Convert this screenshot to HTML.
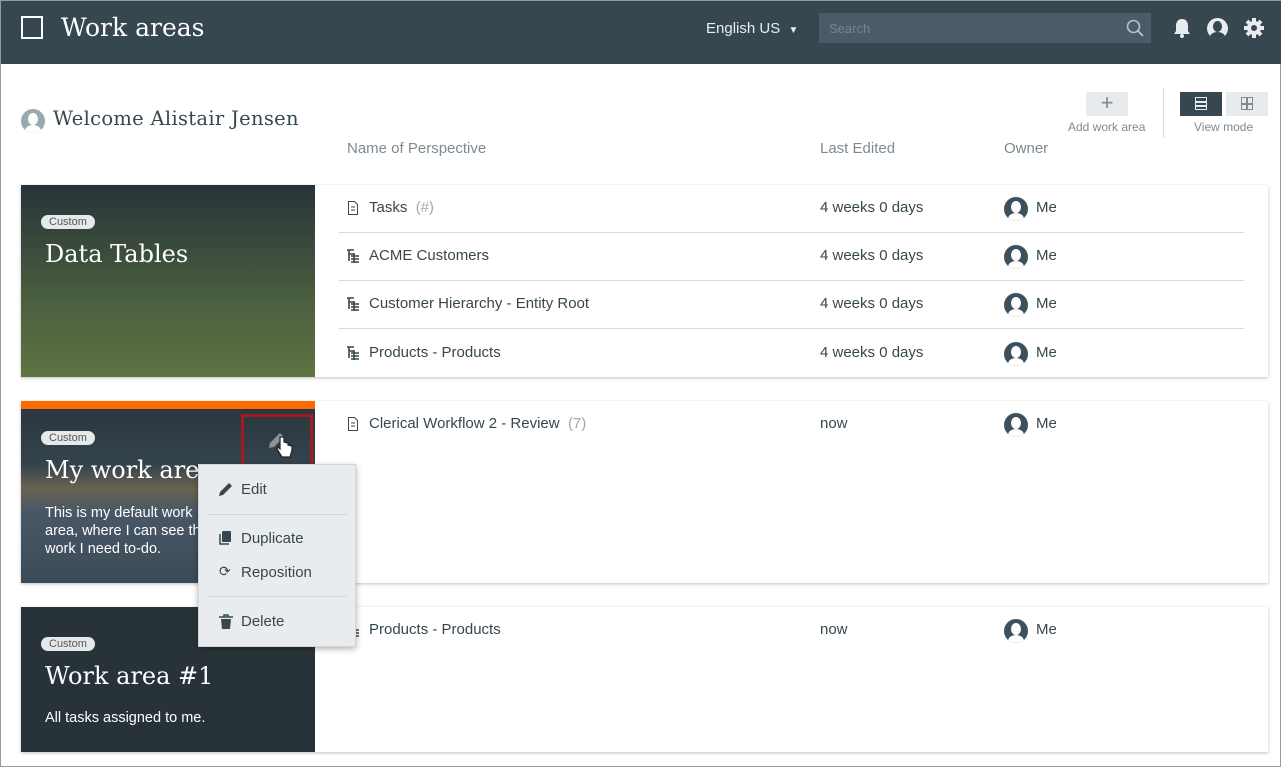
<!DOCTYPE html>
<html><head><meta charset="utf-8"><style>
*{box-sizing:border-box;margin:0;padding:0}
body{width:1281px;height:767px;overflow:hidden;background:#fff;font-family:"Liberation Sans",sans-serif;position:relative;border:1px solid #999}
.abs{position:absolute}
.hdr{left:0;top:0;width:1281px;height:63px;background:#37474f}
.serif{font-family:"DejaVu Serif","Liberation Serif",serif}
.card{position:absolute;left:20px;width:1247px;background:#fff;box-shadow:0 1px 3px rgba(0,0,0,.25)}
.img{position:absolute;left:0;top:0;width:294px;height:100%;color:#fff}
.badge{position:absolute;left:20px;font-size:11px;color:#555;background:#e6e9ec;border-radius:8px;padding:1px 8px}
.ttl{position:absolute;left:24px;font-size:24px;font-family:"DejaVu Serif","Liberation Serif",serif;font-weight:normal}
.row{position:absolute;left:318px;width:905px;height:48px;font-size:15px;color:#37474f}
.row .n{position:absolute;left:30px;top:14px}
.row .d{position:absolute;left:481px;top:14px}
.row .o{position:absolute;left:697px;top:14px}
.row .ic{position:absolute;left:8px;top:16px}
.av{position:absolute;left:665px;top:12px;width:24px;height:24px;border-radius:50%;background:#3d505c;overflow:hidden}
.av:before{content:"";position:absolute;left:7px;top:4px;width:10px;height:12px;border-radius:50%;background:#fff}
.av:after{content:"";position:absolute;left:4px;top:16px;width:16px;height:12px;border-radius:50%;background:#fff}
.sep{position:absolute;left:20px;width:885px;height:1px;background:#d5dadf;bottom:0}
.g{color:#a0a8ae}
.mi{position:absolute;left:20px;font-size:15px;color:#37474f}
</style></head><body>
<div class="abs hdr"></div>
<div class="abs" style="left:20px;top:15px;width:22px;height:23px;border:2px solid #fff"></div>
<div class="abs serif" style="left:60px;top:12px;font-size:25px;color:#fff">Work areas</div>
<div class="abs" style="left:705px;top:19px;font-size:15px;color:#e8ecef">English US &nbsp;<span style="font-size:10px">▼</span></div>
<div class="abs" style="left:818px;top:12px;width:332px;height:30px;background:#4a5c67"></div>
<div class="abs" style="left:828px;top:20px;font-size:13px;color:#75868f">Search</div>
<svg class="abs" style="left:1125px;top:18px" width="18" height="18"><circle cx="7.5" cy="7.5" r="6" fill="none" stroke="#b8c2c8" stroke-width="1.6"/><path d="M12 12l5 5" stroke="#b8c2c8" stroke-width="1.8"/></svg>
<svg class="abs" style="left:1172px;top:16px" width="18" height="22"><path d="M9 2c-4 0-6 3-6 7v5l-2 3h16l-2-3V9c0-4-2-7-6-7z" fill="#e8ecef"/><circle cx="9" cy="19" r="2" fill="#e8ecef"/></svg>
<div class="abs" style="left:1206px;top:17px;width:21px;height:21px;border-radius:50%;background:#e8ecef;overflow:hidden"><div class="abs" style="left:6px;top:3px;width:9px;height:11px;border-radius:50%;background:#37474f"></div><div class="abs" style="left:3px;top:14px;width:15px;height:10px;border-radius:50%;background:#37474f"></div></div>
<svg class="abs" style="left:1242px;top:16px" width="22" height="22" viewBox="0 0 22 22"><g fill="#e8ecef"><circle cx="11" cy="11" r="7"/><g stroke="#e8ecef" stroke-width="4"><path d="M11 1v20M1 11h20M4 4l14 14M18 4L4 18"/></g></g><circle cx="11" cy="11" r="3" fill="#37474f"/></svg>

<div class="abs" style="left:20px;top:108px;width:24px;height:24px;border-radius:50%;background:#9aa8b0;overflow:hidden"><div class="abs" style="left:7px;top:4px;width:10px;height:12px;border-radius:50%;background:#fff"></div><div class="abs" style="left:4px;top:16px;width:16px;height:12px;border-radius:50%;background:#fff"></div></div>
<div class="abs serif" style="left:52px;top:106px;font-size:19.5px;color:#37474f;letter-spacing:.3px">Welcome Alistair Jensen</div>
<div class="abs" style="left:346px;top:139px;font-size:15px;color:#7d8a92">Name of Perspective</div>
<div class="abs" style="left:819px;top:139px;font-size:15px;color:#7d8a92">Last Edited</div>
<div class="abs" style="left:1003px;top:139px;font-size:15px;color:#7d8a92">Owner</div>
<div class="abs" style="left:1085px;top:91px;width:42px;height:24px;background:#e8ebee;color:#7d8a92;text-align:center;font-size:22px;line-height:22px">+</div>
<div class="abs" style="left:1067px;top:119px;font-size:12px;color:#7d8a92">Add work area</div>
<div class="abs" style="left:1162px;top:87px;width:1px;height:50px;background:#d5dadf"></div>
<div class="abs" style="left:1179px;top:91px;width:42px;height:24px;background:#37474f"><div class="abs" style="left:15px;top:5px;width:12px;height:13px;border:1.5px solid #e8ecef"></div><div class="abs" style="left:15px;top:9px;width:12px;height:1.5px;background:#e8ecef"></div><div class="abs" style="left:15px;top:13px;width:12px;height:1.5px;background:#e8ecef"></div></div>
<div class="abs" style="left:1225px;top:91px;width:42px;height:24px;background:#e8ebee"><div class="abs" style="left:15px;top:5px;width:12px;height:13px;border:1.5px solid #7d8a92"></div><div class="abs" style="left:20px;top:5px;width:1.5px;height:13px;background:#7d8a92"></div><div class="abs" style="left:15px;top:11px;width:12px;height:1.5px;background:#7d8a92"></div></div>
<div class="abs" style="left:1193px;top:119px;font-size:12px;color:#7d8a92">View mode</div>

<div class="card" style="top:184px;height:192px">
 <div class="img" style="background:linear-gradient(#283339,#4a5f3e 60%,#5e7443)">
  <div class="badge" style="top:30px">Custom</div>
  <div class="ttl" style="top:55px">Data Tables</div>
 </div>
</div>
<div class="row" style="top:184px;left:338px"><svg class="ic" width="12" height="14"><path d="M1.5.5h6l3 3v10h-9z" fill="none" stroke="#37474f"/><path d="M4 6h4M4 9h4" stroke="#37474f"/></svg><span class="n">Tasks &nbsp;<span class="g">(#)</span></span><span class="d">4 weeks 0 days</span><div class="av"></div><span class="o">Me</span><div class="sep" style="left:0;width:905px"></div></div>
<div class="row" style="top:232px;left:338px"><svg class="ic" width="14" height="14"><path d="M0 1h7M2 1v11M2 5h5M7 4v10M4 7h8M4 10h8M4 13h8" stroke="#37474f" stroke-width="1.6"/></svg><span class="n">ACME Customers</span><span class="d">4 weeks 0 days</span><div class="av"></div><span class="o">Me</span><div class="sep" style="left:0;width:905px"></div></div>
<div class="row" style="top:280px;left:338px"><svg class="ic" width="14" height="14"><path d="M0 1h7M2 1v11M2 5h5M7 4v10M4 7h8M4 10h8M4 13h8" stroke="#37474f" stroke-width="1.6"/></svg><span class="n">Customer Hierarchy - Entity Root</span><span class="d">4 weeks 0 days</span><div class="av"></div><span class="o">Me</span><div class="sep" style="left:0;width:905px"></div></div>
<div class="row" style="top:329px;left:338px"><svg class="ic" width="14" height="14"><path d="M0 1h7M2 1v11M2 5h5M7 4v10M4 7h8M4 10h8M4 13h8" stroke="#37474f" stroke-width="1.6"/></svg><span class="n">Products - Products</span><span class="d">4 weeks 0 days</span><div class="av"></div><span class="o">Me</span></div>

<div class="card" style="top:400px;height:182px">
 <div class="img" style="background:linear-gradient(#2a353c,#34434c 35%,#6a6250 48%,#4a5866 60%,#3a4b58)">
  <div class="abs" style="left:0;top:0;width:294px;height:8px;background:#ff6a00"></div>
  <div class="badge" style="top:30px">Custom</div>
  <div class="ttl" style="top:55px">My work area</div>
  <div class="abs" style="left:24px;top:103px;font-size:14.5px;line-height:18px">This is my default work<br>area, where I can see the<br>work I need to-do.</div>
 </div>
</div>
<div class="row" style="top:400px;left:338px"><svg class="ic" width="12" height="14"><path d="M1.5.5h6l3 3v10h-9z" fill="none" stroke="#37474f"/><path d="M4 6h4M4 9h4" stroke="#37474f"/></svg><span class="n">Clerical Workflow 2 - Review &nbsp;<span class="g">(7)</span></span><span class="d">now</span><div class="av"></div><span class="o">Me</span></div>

<div class="card" style="top:606px;height:145px">
 <div class="img" style="background:#283339">
  <div class="badge" style="top:30px">Custom</div>
  <div class="ttl" style="top:55px">Work area #1</div>
  <div class="abs" style="left:24px;top:103px;font-size:14.5px">All tasks assigned to me.</div>
 </div>
</div>
<div class="row" style="top:606px;left:338px"><svg class="ic" width="14" height="14"><path d="M0 1h7M2 1v11M2 5h5M7 4v10M4 7h8M4 10h8M4 13h8" stroke="#37474f" stroke-width="1.6"/></svg><span class="n">Products - Products</span><span class="d">now</span><div class="av"></div><span class="o">Me</span></div>

<div class="abs" style="left:240px;top:413px;width:72px;height:58px;border:3px solid #a01c22"></div>
<svg class="abs" style="left:265px;top:428px" width="22" height="22"><path d="M3 19l1-5 10-10 4 4-10 10z" fill="#8c9499"/></svg>
<svg class="abs" style="left:275px;top:434px" width="18" height="26"><path d="M4 2v12l-2-2-1 2 5 8h8l2-7v-4l-4-1V8l-4-1V2z" fill="#fff" stroke="#222" stroke-width="1.2"/></svg>

<div class="abs" style="left:197px;top:463px;width:158px;height:183px;background:#e9ecef;border:1px solid #d0d5d9;box-shadow:0 2px 6px rgba(0,0,0,.3)">
 <svg class="abs" style="left:19px;top:16px" width="16" height="16"><path d="M1 15l1-4 9-9 3 3-9 9z" fill="#37474f"/></svg>
 <div class="mi" style="left:42px;top:16px">Edit</div>
 <div class="abs" style="left:8px;top:49px;width:140px;height:1px;background:#d0d5d9"></div>
 <svg class="abs" style="left:20px;top:66px" width="14" height="14"><path d="M1 3v10h9" fill="none" stroke="#37474f" stroke-width="1.5"/><rect x="3" y="0" width="9" height="11" rx="1" fill="#37474f"/></svg>
 <div class="mi" style="left:42px;top:65px">Duplicate</div>
 <div class="mi" style="left:20px;top:98px;font-size:14px">⟳</div>
 <div class="mi" style="left:42px;top:99px">Reposition</div>
 <div class="abs" style="left:8px;top:131px;width:140px;height:1px;background:#d0d5d9"></div>
 <svg class="abs" style="left:20px;top:149px" width="14" height="16"><path d="M0 3h14M5 3V1h4v2" stroke="#37474f" stroke-width="1.6" fill="none"/><path d="M2 5h10l-1 10H3z" fill="#37474f"/></svg>
 <div class="mi" style="left:42px;top:148px">Delete</div>
</div>
</body></html>
